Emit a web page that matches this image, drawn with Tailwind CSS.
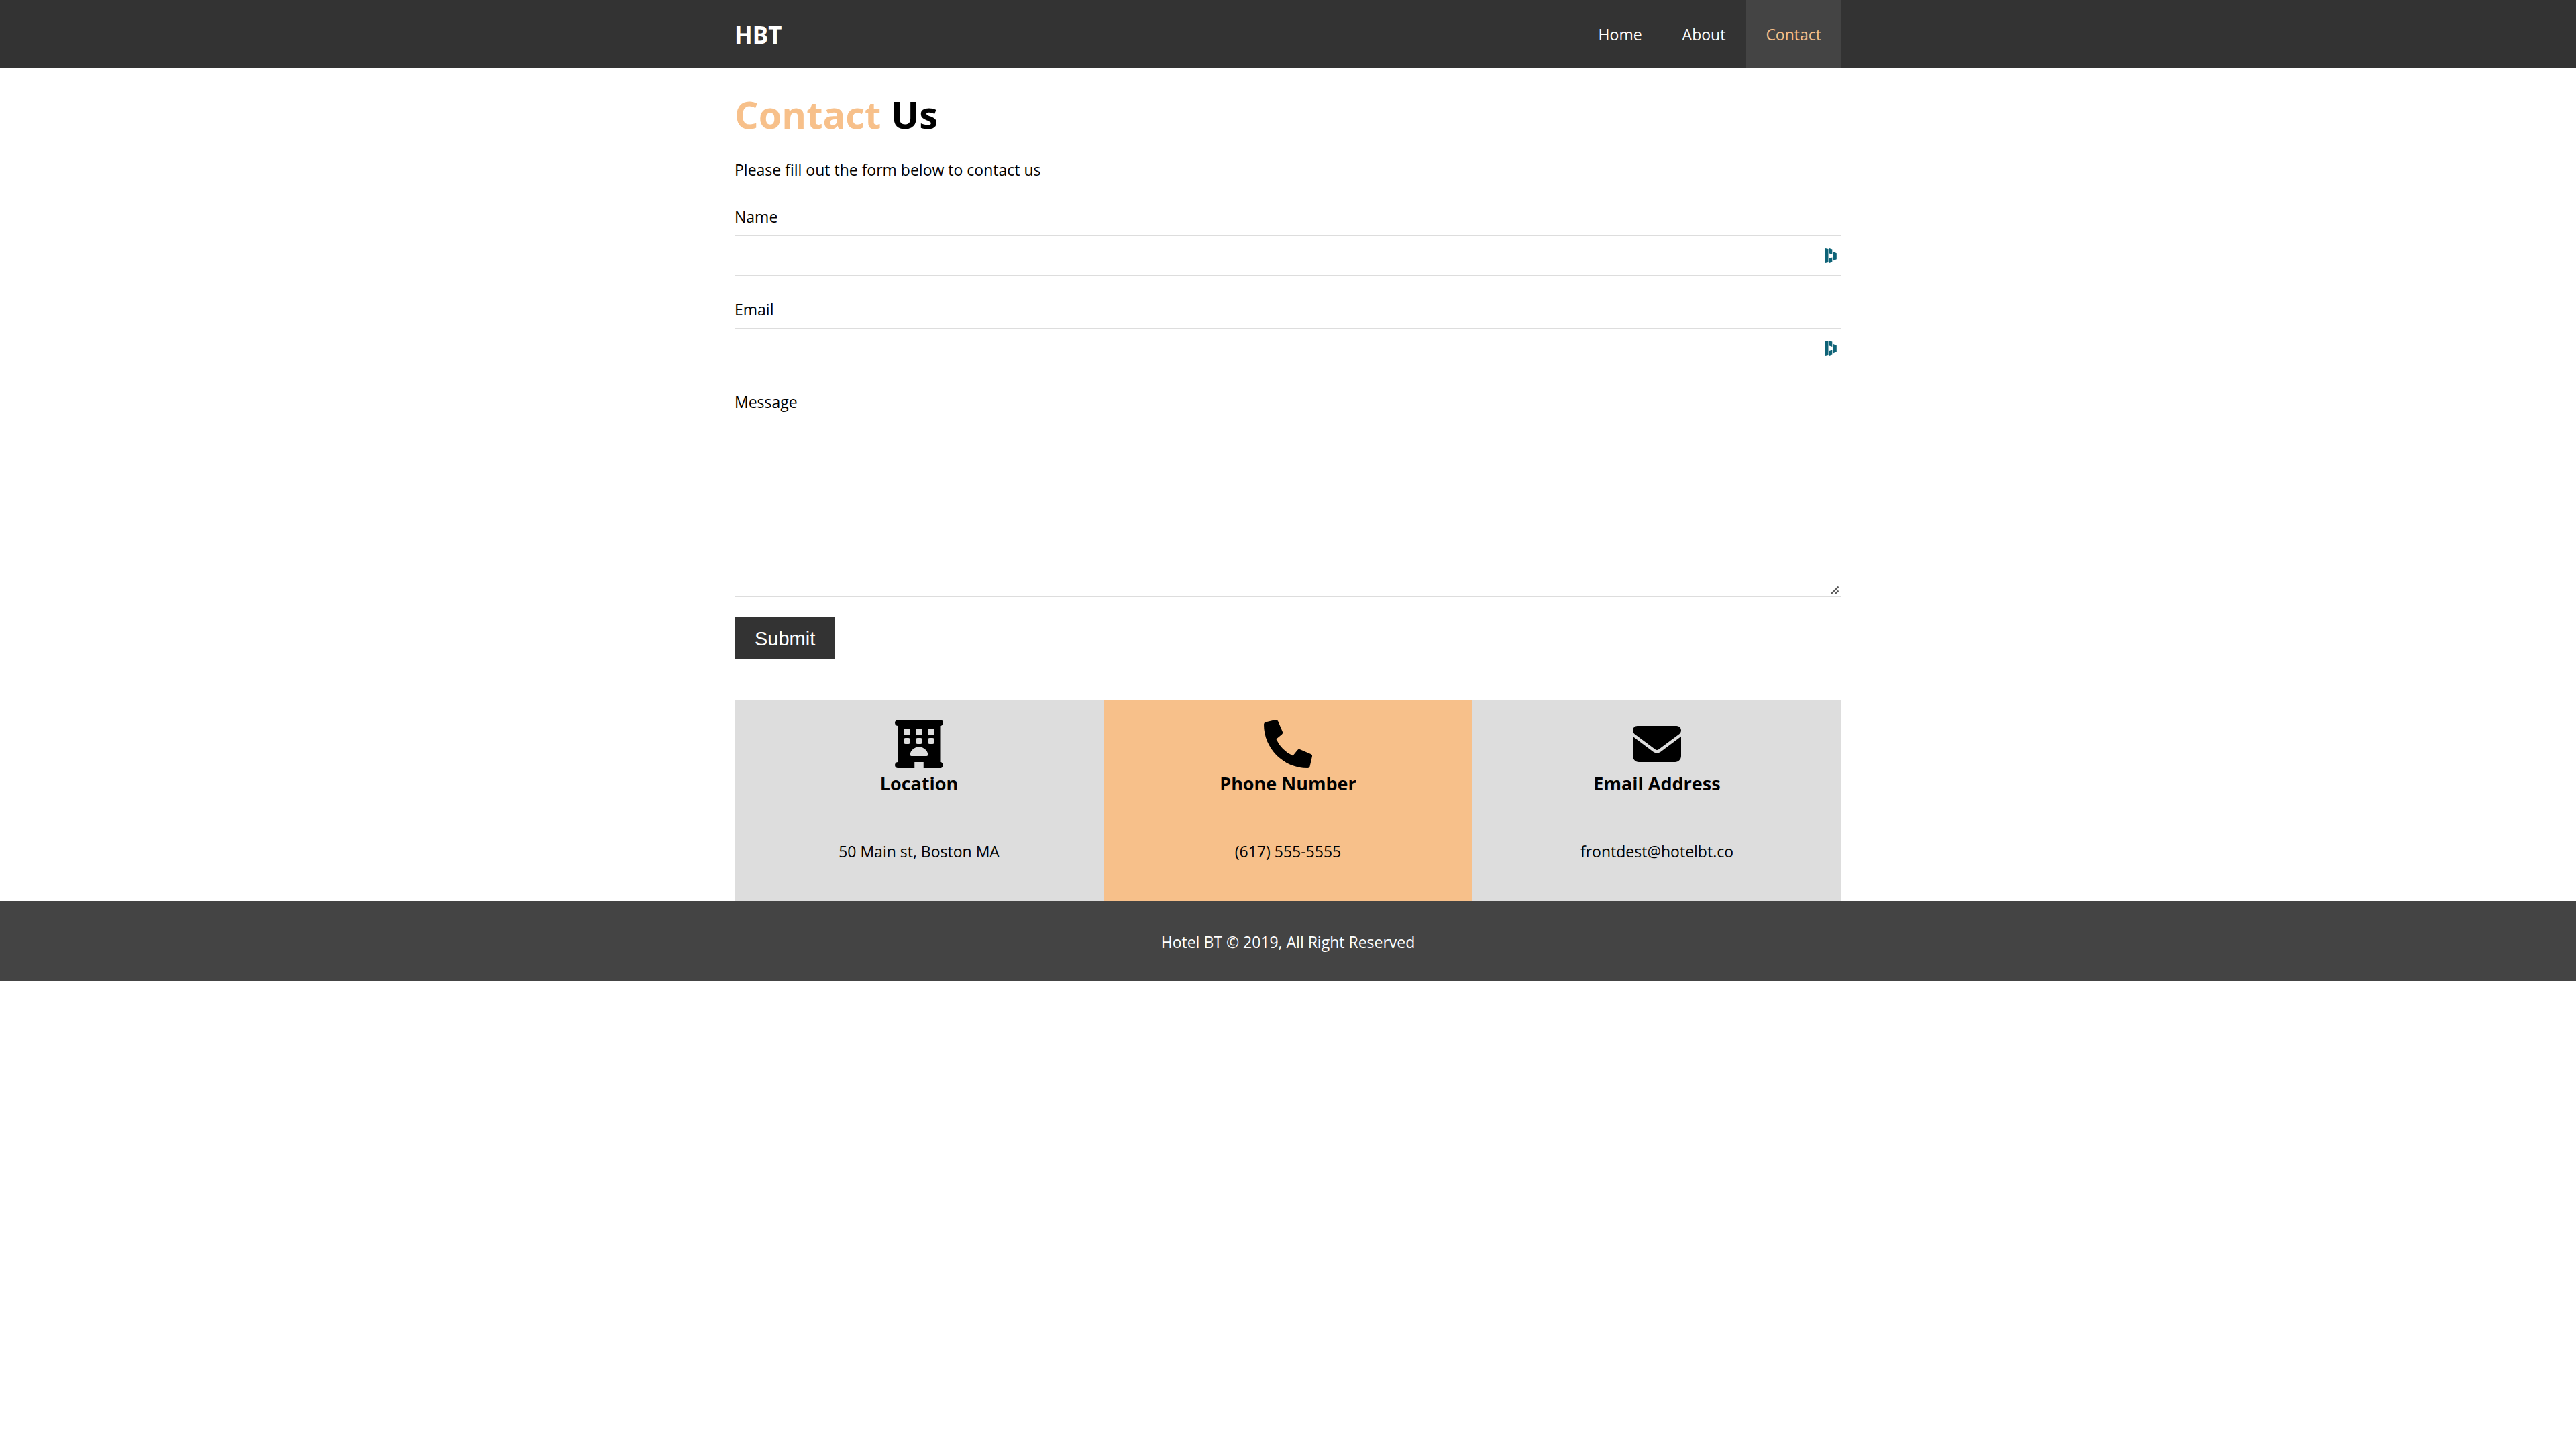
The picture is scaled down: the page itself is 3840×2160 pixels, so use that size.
<!DOCTYPE html>
<html lang="en">
<head>
<meta charset="utf-8">
<meta name="viewport" content="width=device-width, initial-scale=1">
<title>HBT | Contact</title>
<script src="https://cdn.jsdelivr.net/npm/@tailwindcss/browser@4"></script>
</head>
<body class="bg-white font-['Open_Sans','Noto_Sans',sans-serif] text-[23px] leading-9 text-black">
<header class="bg-[#333]">
  <div class="mx-auto flex max-w-[1650px] items-stretch justify-between">
    <a href="#" class="flex items-center pt-0.5 text-[35px] font-bold text-white">HBT</a>
    <nav class="flex">
      <a href="#" class="px-[30px] pt-[33px] pb-8 text-white">Home</a>
      <a href="#" class="px-[30px] pt-[33px] pb-8 text-white">About</a>
      <a href="#" aria-current="page" class="bg-[#444] px-[30px] pt-[33px] pb-8 text-[#f7c08a]">Contact</a>
    </nav>
  </div>
</header>

<main class="mx-auto max-w-[1650px]">
  <h1 class="pt-6 text-[56px] leading-[90px] font-bold"><span class="text-[#f7c08a]">Contact</span> Us</h1>
  <p class="pt-5">Please fill out the form below to contact us</p>

  <form class="pt-8">
    <div class="flex flex-col gap-2">
      <label for="name" class="leading-10">Name</label>
      <div class="relative">
        <input id="name" type="text" class="block h-[60px] w-full border border-[#ddd] px-3 outline-none">
        <svg class="absolute top-[19px] right-[7px] h-[22px] w-[17px] fill-[#0e6377]" viewBox="0 0 17 22" aria-hidden="true"><path d="M0 0L4.500 1V21L0 22zM6 0L10.300 1.500V9L6 7.500zM6 15L10.300 13.500V20.500L6 22zM12 5L16.800 7.200V16.300L12 18.300z"/></svg>
      </div>
    </div>
    <div class="flex flex-col gap-2 pt-[30px]">
      <label for="email" class="leading-10">Email</label>
      <div class="relative">
        <input id="email" type="email" class="block h-[60px] w-full border border-[#ddd] px-3 outline-none">
        <svg class="absolute top-[19px] right-[7px] h-[22px] w-[17px] fill-[#0e6377]" viewBox="0 0 17 22" aria-hidden="true"><path d="M0 0L4.500 1V21L0 22zM6 0L10.300 1.500V9L6 7.500zM6 15L10.300 13.500V20.500L6 22zM12 5L16.800 7.200V16.300L12 18.300z"/></svg>
      </div>
    </div>
    <div class="flex flex-col gap-2 pt-[30px]">
      <label for="message" class="leading-10">Message</label>
      <div class="relative">
        <textarea id="message" class="block h-[263px] w-full resize-none border border-[#ddd] p-3 outline-none"></textarea>
        <svg class="pointer-events-none absolute right-1 bottom-1 h-3 w-3 stroke-[#555]" viewBox="0 0 12 12" fill="none" stroke-width="2" aria-hidden="true"><path d="M.5 11.500L11.500 .5M6.500 11.500L11.500 6.500"/></svg>
      </div>
    </div>
    <button type="submit" class="mt-[30px] block h-[63px] bg-[#333] px-[30px] font-['Liberation_Sans',Arial,sans-serif] text-[29px] text-white">Submit</button>
  </form>

  <section class="mt-[60px] grid grid-cols-3 text-center">
    <div class="bg-[#ddd] pt-[30px] pb-14">
      <svg class="mx-auto size-[72px]" viewBox="0 0 512 512" aria-hidden="true"><path fill-rule="evenodd" d="M32 0H480a32 32 0 0 1 0 64V448a32 32 0 0 1 0 64H304V448H208v64H32a32 32 0 0 1 0-64V64A32 32 0 0 1 32 0zM112 96a16 16 0 0 0-16 16v32a16 16 0 0 0 16 16h32a16 16 0 0 0 16-16v-32a16 16 0 0 0-16-16zM240 96a16 16 0 0 0-16 16v32a16 16 0 0 0 16 16h32a16 16 0 0 0 16-16v-32a16 16 0 0 0-16-16zM368 96a16 16 0 0 0-16 16v32a16 16 0 0 0 16 16h32a16 16 0 0 0 16-16v-32a16 16 0 0 0-16-16zM112 192a16 16 0 0 0-16 16v32a16 16 0 0 0 16 16h32a16 16 0 0 0 16-16v-32a16 16 0 0 0-16-16zM240 192a16 16 0 0 0-16 16v32a16 16 0 0 0 16 16h32a16 16 0 0 0 16-16v-32a16 16 0 0 0-16-16zM368 192a16 16 0 0 0-16 16v32a16 16 0 0 0 16 16h32a16 16 0 0 0 16-16v-32a16 16 0 0 0-16-16zM176 384H336c8.800 0 17.300-7.200 16-16C345.200 322.700 304.900 288 256 288s-89.200 34.700-96 80c-1.300 8.800 7.200 16 16 16z"/></svg>
      <h2 class="text-[27px] leading-[46px] font-bold">Location</h2>
      <p class="pt-[60px]">50 Main st, Boston MA</p>
    </div>
    <div class="bg-[#f7c08a] pt-[30px] pb-14">
      <svg class="mx-auto size-[72px]" viewBox="0 0 512 512" aria-hidden="true"><path d="M497.390 361.800l-112-48a24 24 0 0 0-28 6.900l-49.600 60.600A370.660 370.660 0 0 1 130.600 204.110l60.600-49.600a23.940 23.940 0 0 0 6.900-28l-48-112A24.160 24.160 0 0 0 122.600.610l-104 24A24 24 0 0 0 0 48c0 256.500 207.900 464 464 464a24 24 0 0 0 23.400-18.600l24-104a24.290 24.290 0 0 0-14.010-27.600z"/></svg>
      <h2 class="text-[27px] leading-[46px] font-bold">Phone Number</h2>
      <p class="pt-[60px]">(617) 555-5555</p>
    </div>
    <div class="bg-[#ddd] pt-[30px] pb-14">
      <svg class="mx-auto size-[72px]" viewBox="0 0 512 512" aria-hidden="true"><path d="M48 64C21.500 64 0 85.500 0 112c0 15.100 7.100 29.300 19.200 38.400L236.800 313.600c11.400 8.500 27 8.500 38.400 0L492.800 150.400c12.100-9.100 19.200-23.300 19.200-38.400c0-26.500-21.500-48-48-48H48zM0 176V384c0 35.300 28.700 64 64 64H448c35.300 0 64-28.700 64-64V176L294.400 339.200c-22.800 17.100-54 17.100-76.800 0L0 176z"/></svg>
      <h2 class="text-[27px] leading-[46px] font-bold">Email Address</h2>
      <p class="pt-[60px]">frontdest@hotelbt.co</p>
    </div>
  </section>
</main>

<footer class="bg-[#444] pt-[43px] pb-[41px] text-center text-white">
  <p>Hotel BT © 2019, All Right Reserved</p>
</footer>
</body>
</html>
